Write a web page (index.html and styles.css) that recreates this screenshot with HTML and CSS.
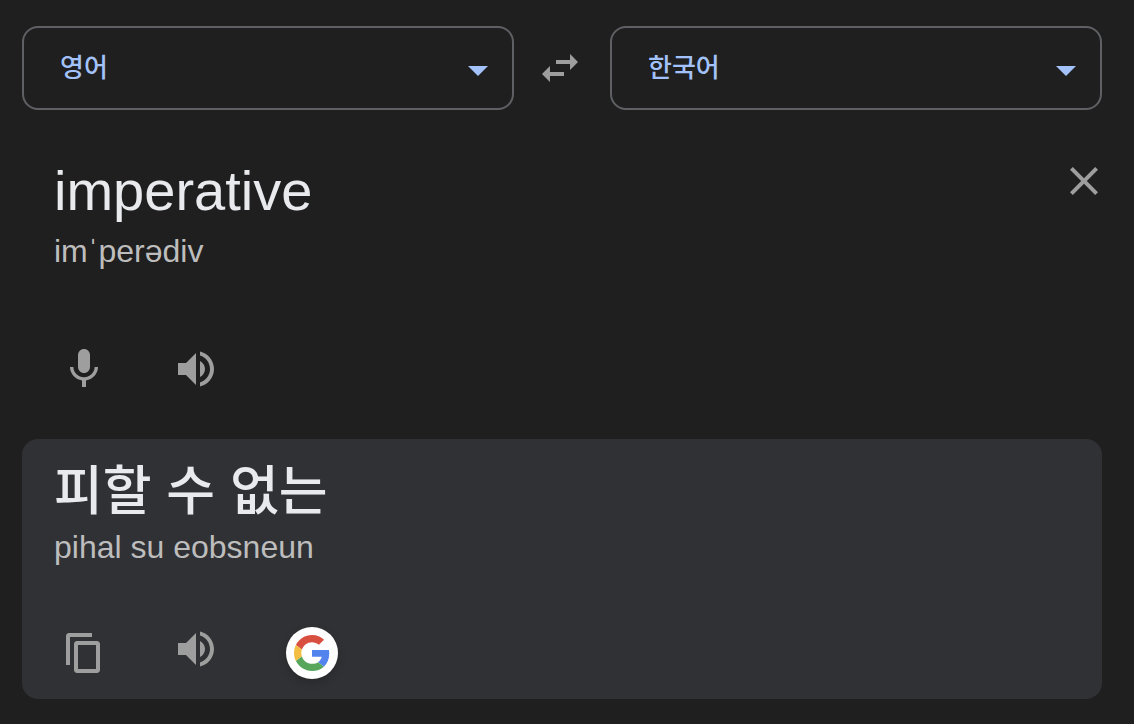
FILE: index.html
```html
<!DOCTYPE html>
<html lang="ko">
<head>
<meta charset="utf-8">
<meta name="viewport" content="width=device-width, initial-scale=1">
<title>번역</title>
<link rel="stylesheet" href="styles.css">
</head>
<body>
<main class="translator">
  <div class="languages">
    <div class="picker">
      <select class="picker-select" aria-label="출발어">
        <option selected>영어</option>
        <option>한국어</option>
      </select>
      <svg class="picker-arrow" viewBox="0 0 24 24" aria-hidden="true"><path d="M7 10l5 5 5-5z"/></svg>
    </div>
    <button class="icon-button" type="button" aria-label="언어 전환">
      <svg class="icon" viewBox="0 0 24 24" aria-hidden="true"><path d="M6.99 11L3 15l3.99 4v-3H14v-2H6.99v-3zM21 9l-3.99-4v3H10v2h7.01v3L21 9z"/></svg>
    </button>
    <div class="picker">
      <select class="picker-select" aria-label="도착어">
        <option selected>한국어</option>
        <option>영어</option>
      </select>
      <svg class="picker-arrow" viewBox="0 0 24 24" aria-hidden="true"><path d="M7 10l5 5 5-5z"/></svg>
    </div>
  </div>

  <section class="source" aria-label="원문">
    <div class="source-head">
      <div class="words">
        <p class="word" lang="en">imperative</p>
        <p class="reading" lang="en">imˈperədiv</p>
      </div>
      <button class="icon-button" type="button" aria-label="지우기">
        <svg class="icon" viewBox="0 0 24 24" aria-hidden="true"><path d="M19 6.41L17.59 5 12 10.59 6.41 5 5 6.41 10.59 12 5 17.59 6.41 19 12 13.41 17.59 19 19 17.59 13.41 12z"/></svg>
      </button>
    </div>
    <div class="actions">
      <button class="icon-button" type="button" aria-label="음성 입력">
        <svg class="icon" viewBox="0 0 24 24" aria-hidden="true"><path d="M12 14c1.66 0 3-1.34 3-3V5c0-1.66-1.34-3-3-3S9 3.34 9 5v6c0 1.66 1.34 3 3 3z"/><path d="M17.300 11c0 3-2.540 5.100-5.300 5.100S6.700 14 6.700 11H5c0 3.410 2.720 6.230 6 6.720V21h2v-3.280c3.280-.490 6-3.310 6-6.720h-1.700z"/></svg>
      </button>
      <button class="icon-button listen" type="button" aria-label="듣기">
        <svg class="icon" viewBox="0 0 24 24" aria-hidden="true"><path d="M3 9v6h4l5 5V4L7 9H3zm13.500 3c0-1.770-1.020-3.290-2.500-4.030v8.050c1.480-.730 2.500-2.250 2.500-4.020zM14 3.230v2.060c2.890.860 5 3.540 5 6.710s-2.110 5.850-5 6.710v2.060c4.010-.910 7-4.490 7-8.770s-2.990-7.860-7-8.770z"/></svg>
      </button>
    </div>
  </section>

  <section class="result" aria-label="번역문">
    <div class="words">
      <p class="word word-ko">피할 수 없는</p>
      <p class="reading" lang="ko-Latn">pihal su eobsneun</p>
    </div>
    <div class="actions">
      <button class="icon-button" type="button" aria-label="복사">
        <svg class="icon" viewBox="0 0 24 24" aria-hidden="true"><path d="M16 2H4.500C3.670 2 3 2.670 3 3.500V18h2V4h11V2zM18.500 6h-10C7.670 6 7 6.670 7 7.500v13c0 .830.670 1.500 1.500 1.500h10c.830 0 1.500-.670 1.500-1.500v-13c0-.830-.670-1.500-1.500-1.500zM18 20H9V8h9v12z"/></svg>
      </button>
      <button class="icon-button listen" type="button" aria-label="듣기">
        <svg class="icon" viewBox="0 0 24 24" aria-hidden="true"><path d="M3 9v6h4l5 5V4L7 9H3zm13.500 3c0-1.770-1.020-3.290-2.500-4.030v8.050c1.480-.730 2.500-2.250 2.500-4.020zM14 3.230v2.060c2.890.860 5 3.540 5 6.710s-2.110 5.850-5 6.710v2.060c4.010-.910 7-4.490 7-8.770s-2.990-7.860-7-8.770z"/></svg>
      </button>
      <button class="google-button" type="button" aria-label="Google 검색">
        <svg class="google-logo" viewBox="0 0 48 48" aria-hidden="true">
          <path fill="#d94f3f" d="M24 9.500c3.540 0 6.710 1.220 9.210 3.600l6.850-6.850C35.900 2.380 30.470 0 24 0 14.620 0 6.510 5.380 2.560 13.220l7.980 6.190C12.430 13.720 17.740 9.500 24 9.500z"/>
          <path fill="#5384ee" d="M46.980 24.550c0-1.570-.150-3.090-.380-4.550H24v9.020h12.940c-.580 2.960-2.260 5.480-4.780 7.180l7.730 6c4.510-4.180 7.090-10.360 7.090-17.650z"/>
          <path fill="#f3be42" d="M10.530 28.590c-.480-1.450-.760-2.990-.760-4.590s.270-3.140.760-4.590l-7.980-6.190C.920 16.460 0 20.120 0 24s.920 7.540 2.560 10.780l7.970-6.190z"/>
          <path fill="#58a65c" d="M24 48c6.480 0 11.930-2.130 15.890-5.810l-7.730-6c-2.150 1.450-4.920 2.300-8.160 2.300-6.260 0-11.570-4.220-13.470-9.910l-7.980 6.190C6.510 42.620 14.620 48 24 48z"/>
        </svg>
      </button>
    </div>
  </section>
</main>
</body>
</html>
```
FILE: styles.css
```css
* {
  box-sizing: border-box;
}

body {
  margin: 0;
  background: #1f1f1f;
  color: #e8eaed;
  font-family: "Liberation Sans", "Noto Sans CJK KR", sans-serif;
}

.translator {
  padding: 26px 32px 24px 22px;
}

.languages {
  display: grid;
  grid-template-columns: 1fr 52px 1fr;
  column-gap: 22px;
  align-items: center;
}

.picker {
  position: relative;
}

.picker-select {
  display: block;
  width: 100%;
  height: 84px;
  padding: 0 80px 6px 36px;
  border: 2px solid #5f6064;
  border-radius: 16px;
  appearance: none;
  background: transparent;
  color: #a3c2fa;
  font-family: "Noto Sans CJK KR", sans-serif;
  font-size: 26px;
  font-weight: 500;
}

.picker-arrow {
  position: absolute;
  top: 20px;
  right: 12px;
  width: 48px;
  height: 48px;
  fill: #a3c2fa;
  pointer-events: none;
}

.icon-button {
  flex: none;
  width: 48px;
  height: 48px;
  padding: 0;
  border: 0;
  background: transparent;
  color: #9e9e9e;
  cursor: pointer;
}

.icon {
  display: block;
  width: 100%;
  height: 100%;
  fill: currentColor;
}

.source {
  padding: 47px 0 38px 32px;
}

.source-head {
  display: flex;
  align-items: flex-start;
  justify-content: space-between;
  margin-right: -6px;
}

.words {
  display: grid;
  row-gap: 8px;
  padding-top: 2px;
}

.word,
.reading {
  margin: 0;
}

.word {
  font-size: 56px;
  line-height: 64px;
}

.word-ko {
  font-family: "Noto Sans CJK KR", sans-serif;
  font-size: 53px;
  font-weight: 500;
}

.reading {
  color: #bdbdbd;
  font-size: 32px;
  line-height: 40px;
}

.actions {
  display: flex;
  align-items: center;
  min-height: 56px;
  margin-top: 74px;
  padding-left: 6px;
}

.actions .listen {
  align-self: flex-start;
  margin: 0 66px 0 64px;
}

.source .actions {
  align-items: flex-start;
}

.result {
  padding: 14px 32px 18px;
  border-radius: 16px;
  background: #303134;
}

.result .actions {
  margin-top: 58px;
}

.google-button {
  display: grid;
  place-items: center;
  width: 52px;
  height: 52px;
  padding: 0;
  border: 0;
  border-radius: 50%;
  background: #fff;
  box-shadow: 0 4px 8px rgba(0, 0, 0, 0.16);
  cursor: pointer;
}

.google-logo {
  width: 36px;
  height: 36px;
}
```
